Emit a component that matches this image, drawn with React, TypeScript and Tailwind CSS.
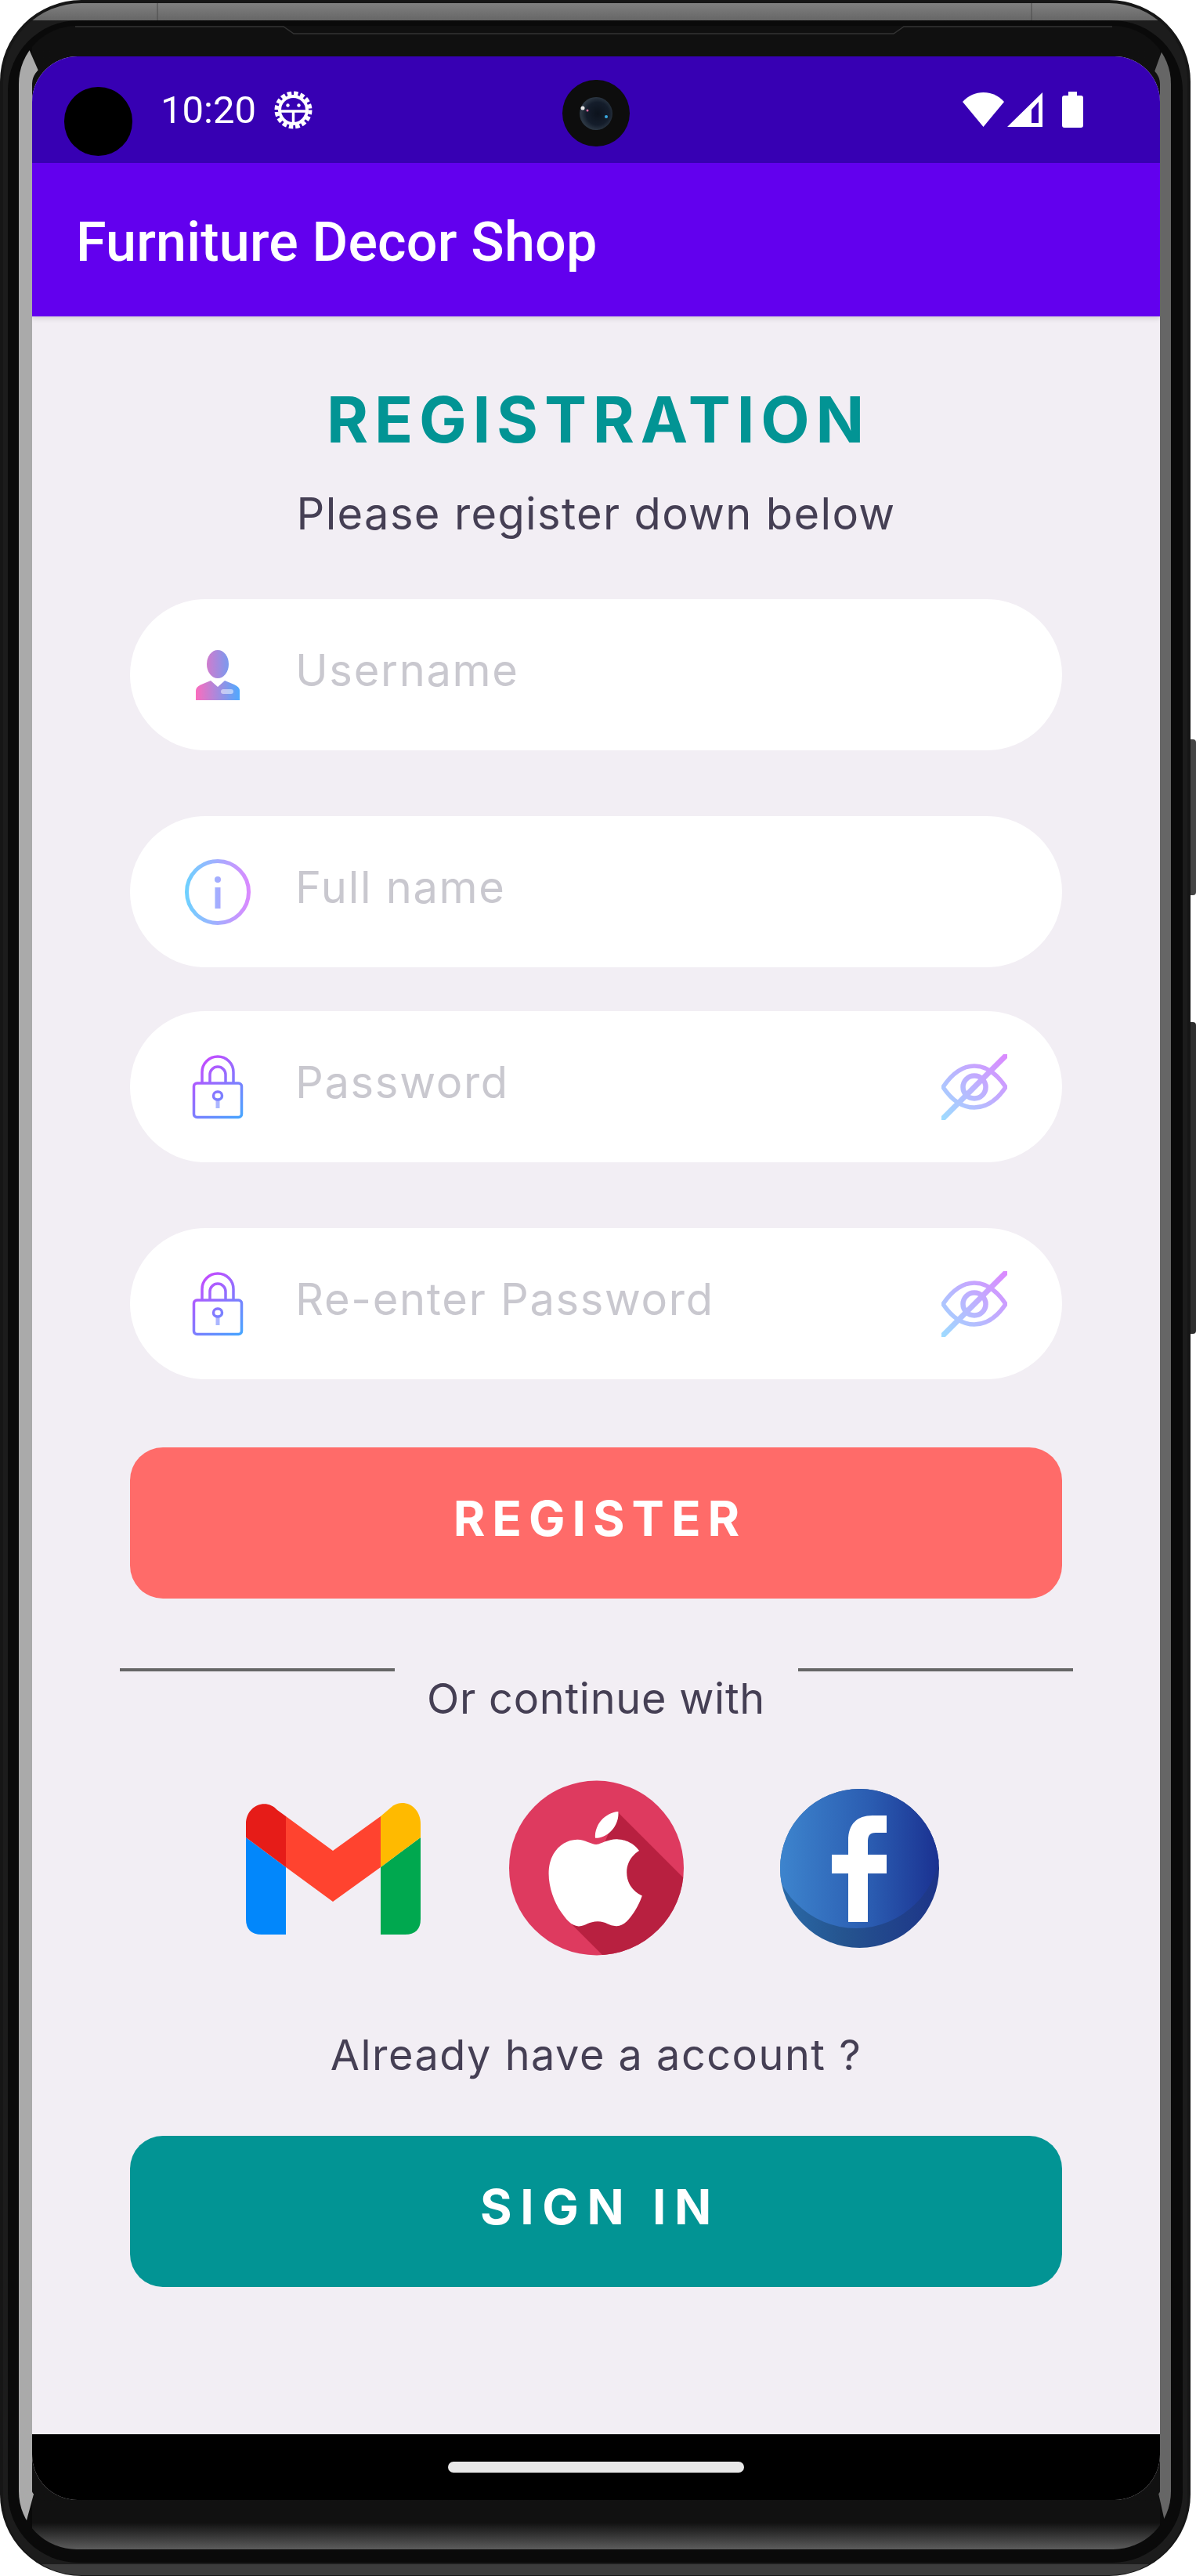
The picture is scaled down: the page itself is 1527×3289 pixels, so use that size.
import React from 'react';

const GearIcon = () => (
  <svg width="49" height="49" viewBox="0 0 49 49" fill="none" className="ml-[23px]">
    <circle cx="24.5" cy="24.5" r="21.5" stroke="#fff" strokeWidth="5" strokeDasharray="5.5 2.94" />
    <circle cx="24.5" cy="24.5" r="17.5" stroke="#fff" strokeWidth="4" />
    <path d="M7 26h35M24.5 26v18" stroke="#fff" strokeWidth="3.5" />
    <circle cx="17.5" cy="18.5" r="2.2" fill="#fff" />
    <circle cx="31.5" cy="18.5" r="2.2" fill="#fff" />
  </svg>
);

const StatusIcons = () => (
  <div className="flex items-center ml-auto">
    <svg width="53" height="44" viewBox="0 0 53 44" fill="#fff">
      <path d="M0 12C14-4 39-4 53 12L26.5 44Z" />
    </svg>
    <svg width="45" height="44" viewBox="0 0 45 44" fill="#fff" fillRule="evenodd" className="ml-[4px]">
      <path d="M0 44L45 0V44ZM31 39H40V12L31 22Z" />
    </svg>
    <svg width="27" height="46" viewBox="0 0 27 46" fill="#fff" className="ml-[25px]">
      <path d="M8 0H19V5H24a3 3 0 0 1 3 3V43a3 3 0 0 1-3 3H3a3 3 0 0 1-3-3V8a3 3 0 0 1 3-3H8Z" />
    </svg>
  </div>
);

const UserIcon = () => (
  <svg width="84" height="84" viewBox="-14 -10 84 84">
    <defs>
      <linearGradient id="userGrad" gradientUnits="userSpaceOnUse" x1="0" y1="0" x2="56" y2="0">
        <stop offset="0" stopColor="#fb6cbd" />
        <stop offset="1" stopColor="#4fa9ff" />
      </linearGradient>
    </defs>
    <ellipse cx="28" cy="18" rx="14" ry="18" fill="url(#userGrad)" />
    <path d="M0 64V52Q0 47 7 44L19 39L28 47L37 39L49 44Q56 47 56 52V64Z" fill="url(#userGrad)" />
    <rect x="32" y="50" width="16" height="6" rx="3" fill="#fff" fillOpacity="0.5" />
  </svg>
);

const InfoIcon = () => (
  <svg width="84" height="84" viewBox="0 0 84 84" fill="none">
    <defs>
      <linearGradient id="infoGrad" gradientUnits="userSpaceOnUse" x1="0" y1="0" x2="84" y2="0">
        <stop offset="0" stopColor="#6cd2ff" />
        <stop offset="1" stopColor="#dc88ff" />
      </linearGradient>
    </defs>
    <circle cx="42" cy="42" r="39.5" stroke="url(#infoGrad)" strokeWidth="5" />
    <circle cx="42" cy="26" r="4" fill="url(#infoGrad)" />
    <rect x="38.5" y="36" width="7" height="27" fill="url(#infoGrad)" />
  </svg>
);

const LockIcon = ({ id }: { id: string }) => (
  <svg width="84" height="84" viewBox="-10 -3 84 84" fill="none">
    <defs>
      <linearGradient id={id} gradientUnits="userSpaceOnUse" x1="0" y1="0" x2="64" y2="79">
        <stop offset="0" stopColor="#d43fff" />
        <stop offset="1" stopColor="#44a8ff" />
      </linearGradient>
    </defs>
    <rect x="1.5" y="34" width="61" height="43.5" rx="4" stroke={`url(#${id})`} strokeWidth="3.5" />
    <path d="M12 33V20a20 20 0 0 1 40 0V33M22 33V23a10 10 0 0 1 20 0V33" stroke={`url(#${id})`} strokeWidth="3.5" />
    <rect x="26.5" y="45" width="11" height="10" rx="5" stroke={`url(#${id})`} strokeWidth="3.5" />
    <path d="M32 56V66" stroke={`url(#${id})`} strokeWidth="5" strokeOpacity="0.6" />
  </svg>
);

const EyeOffIcon = ({ id }: { id: string }) => (
  <svg width="84" height="84" viewBox="0 0 84 84" fill="none">
    <defs>
      <linearGradient id={id} gradientUnits="userSpaceOnUse" x1="0" y1="84" x2="84" y2="0">
        <stop offset="0" stopColor="#9ddcff" />
        <stop offset="1" stopColor="#dc88ff" />
      </linearGradient>
    </defs>
    <path d="M2 42C14 24 28 15 42 15S70 24 82 42C70 60 56 68 42 68S14 60 2 42Z" stroke={`url(#${id})`} strokeWidth="5.5" />
    <circle cx="42" cy="42" r="14.5" stroke={`url(#${id})`} strokeWidth="6.5" />
    <path d="M0 84L84 0" stroke={`url(#${id})`} strokeWidth="7" />
  </svg>
);

const GmailLogo = () => (
  <svg width="223" height="169" viewBox="0 0 223 169">
    <path d="M0 45L51 83V169H20Q0 169 0 149Z" fill="#0287fb" />
    <path d="M172 83L223 45V149Q223 169 203 169H172Z" fill="#00a84f" />
    <path d="M0 45V28C0 4 26-6 40 10L51 18V83Z" fill="#e61c18" />
    <path d="M172 83V18L186 6C200-6 223 4 223 28V45Z" fill="#ffba00" />
    <path d="M51 18L111 62L172 18V83L111 127L51 83Z" fill="#ff432f" />
  </svg>
);

const AppleLogo = () => (
  <svg width="223" height="224" viewBox="0 0 223 224" className="ml-[113px]">
    <defs>
      <clipPath id="appleClip">
        <circle cx="111.5" cy="112" r="111.5" />
      </clipPath>
    </defs>
    <circle cx="111.5" cy="112" r="111.5" fill="#de3a5f" />
    <path d="M138 40L223 125V224H120L80 184Z" fill="#b82040" clipPath="url(#appleClip)" />
    <g transform="translate(37 40) scale(6.1)">
      <path
        fill="#fff"
        d="M12.152 6.896c-.948 0-2.415-1.078-3.96-1.04-2.04.027-3.91 1.183-4.961 3.014-2.117 3.675-.546 9.103 1.519 12.09 1.013 1.454 2.208 3.09 3.792 3.039 1.52-.065 2.09-.987 3.935-.987 1.831 0 2.35.987 3.96.948 1.637-.026 2.676-1.48 3.676-2.948 1.156-1.688 1.636-3.325 1.662-3.415-.039-.013-3.182-1.221-3.22-4.857-.026-3.04 2.48-4.494 2.597-4.559-1.429-2.09-3.623-2.324-4.39-2.376-2-.156-3.675 1.09-4.61 1.09zM15.53 3.83c.843-1.012 1.4-2.427 1.245-3.83-1.207.052-2.662.805-3.532 1.818-.78.896-1.454 2.338-1.273 3.714 1.338.104 2.715-.688 3.559-1.701"
      />
    </g>
  </svg>
);

const FacebookLogo = () => (
  <svg width="203" height="203" viewBox="0 0 203 203" className="ml-[123px]">
    <defs>
      <linearGradient id="fbGrad" x1="0" y1="0" x2="1" y2="0">
        <stop offset="0" stopColor="#3f88d0" />
        <stop offset="0.6" stopColor="#2a5bb0" />
        <stop offset="1" stopColor="#1a3090" />
      </linearGradient>
      <linearGradient id="fbShade" x1="0" y1="0" x2="1" y2="0">
        <stop offset="0" stopColor="#2a6aa8" />
        <stop offset="0.4" stopColor="#25548f" />
        <stop offset="1" stopColor="#1d3488" />
      </linearGradient>
      <clipPath id="fbClip">
        <circle cx="101.5" cy="101.5" r="101.5" />
      </clipPath>
    </defs>
    <circle cx="101.5" cy="101.5" r="101.5" fill="url(#fbShade)" />
    <circle cx="97" cy="70" r="108" fill="url(#fbGrad)" clipPath="url(#fbClip)" />
    <path
      d="M87 170V108H66V84H87V66C87 45 98 34 118 34H136V56H122C114 56 112 60 112 68V84H136V108H112V170Z"
      fill="#fff"
    />
  </svg>
);

const Field = ({
  icon,
  trailing,
  placeholder,
  className,
}: {
  icon: React.ReactNode;
  trailing?: React.ReactNode;
  placeholder: string;
  className?: string;
}) => (
  <div className={`flex items-center w-[1190px] h-[193px] rounded-full bg-white pl-[70px] pr-[70px] ${className || ''}`}>
    <div className="w-[84px] h-[84px] shrink-0">{icon}</div>
    <input
      placeholder={placeholder}
      className="flex-1 min-w-0 ml-[57px] pb-[12px] bg-transparent outline-none font-[Inter,sans-serif] text-[56px] tracking-[1.7px] text-[#453f54] placeholder:text-[#c9c8cf]"
    />
    {trailing && <div className="w-[84px] h-[84px] shrink-0">{trailing}</div>}
  </div>
);

const Divider = () => <div className="w-[351px] h-[4px] bg-[#666666]" />;

export default function App() {
  return (
    <div className="relative w-[1527px] h-[3289px] bg-white overflow-hidden">
      {/* side buttons */}
      <div className="absolute left-[1516px] top-[944px] w-[11px] h-[199px] rounded-r-[4px] bg-[#444444]" />
      <div className="absolute left-[1516px] top-[1305px] w-[11px] h-[398px] rounded-r-[4px] bg-[#2e2e2e]" />

      {/* phone body */}
      <div className="relative w-[1520px] h-[3289px] rounded-[104px] bg-[#161616] pt-[4px] pl-[4px] pr-[4px] pb-[1px]">
        <div className="h-full rounded-[100px] bg-[linear-gradient(180deg,#808080_0,#666666_22px,#1c1c1c_22px,#1c1c1c_calc(100%-14px),#3c3c3c_calc(100%-14px))] pt-[22px] px-[6px] pb-[16px]">
          <div className="h-full rounded-[90px] bg-[#0a0a0a] pt-[7px] pl-[14px] pr-[15px] pb-[17px]">
            <div className="h-full rounded-[74px] border-solid border-l-[17px] border-r-[14px] border-t-[39px] border-b-[63px] border-l-[#aaaaaa] border-r-[#666666] border-t-transparent border-b-transparent bg-origin-border bg-[linear-gradient(180deg,#101010_0,#111111_calc(100%-34px),#5c5c5c_100%)]">
              {/* screen */}
              <div className="relative flex flex-col h-full rounded-[58px] overflow-hidden bg-[#f2eef4]">
                <div className="flex items-center shrink-0 h-[136px] bg-[#3700b3] pl-[164px] pr-[98px] font-[Roboto,sans-serif] text-white">
                  <span className="text-[49px] leading-none">10:20</span>
                  <GearIcon />
                  <StatusIcons />
                </div>
                <div className="relative z-10 flex items-center shrink-0 h-[196px] bg-[#6200ee] pl-[56px] pt-[6px] shadow-[0_3px_6px_rgba(0,0,0,0.12)]">
                  <h1 className="font-[Roboto,sans-serif] font-medium text-[70px] leading-none tracking-[0.2px] text-white">Furniture Decor Shop</h1>
                </div>

                <div className="flex flex-1 flex-col items-center">
                  <h2 className="mt-[90px] h-[84px] ml-[6px] font-[Inter,sans-serif] font-bold text-[81px] leading-[84px] tracking-[7.8px] text-[#029494]">
                    REGISTRATION
                  </h2>
                  <p className="mt-[48px] h-[60px] font-[Inter,sans-serif] text-[56px] leading-[60px] tracking-[1.35px] text-[#453f54]">
                    Please register down below
                  </p>

                  <Field className="mt-[79px]" icon={<UserIcon />} placeholder="Username" />
                  <Field className="mt-[84px]" icon={<InfoIcon />} placeholder="Full name" />
                  <Field
                    className="mt-[56px]"
                    icon={<LockIcon id="lockA" />}
                    trailing={<EyeOffIcon id="eyeA" />}
                    placeholder="Password"
                  />
                  <Field
                    className="mt-[84px]"
                    icon={<LockIcon id="lockB" />}
                    trailing={<EyeOffIcon id="eyeB" />}
                    placeholder="Re-enter Password"
                  />

                  <button className="mt-[87px] w-[1190px] h-[193px] rounded-[42px] bg-[#ff6b69] pb-[13px] pl-[10px] font-[Inter,sans-serif] font-bold text-[62px] tracking-[9px] text-white">
                    REGISTER
                  </button>

                  <div className="relative flex justify-between w-[1217px] mt-[89px]">
                    <Divider />
                    <Divider />
                  </div>
                  <p className="h-[60px] mt-[5px] font-[Inter,sans-serif] text-[54px] leading-[60px] tracking-[0.75px] text-[#453f54]">Or continue with</p>

                  <div className="flex items-center w-[885px] h-[224px] mt-[74px] mr-[9px]">
                    <GmailLogo />
                    <AppleLogo />
                    <FacebookLogo />
                  </div>

                  <p className="h-[60px] mt-[97px] font-[Inter,sans-serif] text-[54px] leading-[60px] tracking-[1.5px] text-[#453f54]">Already have a account ?</p>

                  <button className="mt-[73px] w-[1190px] h-[193px] rounded-[42px] bg-[#029494] pb-[13px] pl-[10px] font-[Inter,sans-serif] font-bold text-[62px] tracking-[10.7px] text-white">
                    SIGN IN
                  </button>
                </div>

                <div className="flex justify-center shrink-0 h-[84px] bg-black pt-[35px]">
                  <div className="w-[378px] h-[14px] rounded-full bg-[#e8e8e8]" />
                </div>

                {/* cutouts from the emulator skin */}
                <div className="absolute left-[41px] top-[39px] w-[87px] h-[88px] rounded-full bg-black" />
                <div className="absolute left-[677px] top-[30px] w-[86px] h-[85px] rounded-full bg-[#0d0d0d] flex items-center justify-center">
                  <svg width="44" height="44" viewBox="0 0 44 44">
                    <defs>
                      <radialGradient id="lens" cx="0.55" cy="0.5" r="0.5">
                        <stop offset="0" stopColor="#0c121c" />
                        <stop offset="0.7" stopColor="#141d2b" />
                        <stop offset="1" stopColor="#2b3642" />
                      </radialGradient>
                    </defs>
                    <circle cx="22" cy="22" r="21" fill="url(#lens)" />
                    <circle cx="5" cy="15" r="2.5" fill="#e8e8e8" />
                    <circle cx="11" cy="18" r="1.5" fill="#d86a9c" />
                    <circle cx="35" cy="26" r="2" fill="#3aa9e0" />
                  </svg>
                </div>
              </div>
            </div>
          </div>
        </div>

        {/* seams on the frame */}
        <svg className="absolute left-0 top-0" width="1520" height="50" fill="none">
          <path d="M201 4V26M1317 4V26" stroke="#4a4a4a" strokeWidth="1" />
          <path d="M96 34H362L375 43H1141L1154 34H1420" stroke="#333333" strokeWidth="1.5" />
        </svg>
      </div>
    </div>
  );
}
